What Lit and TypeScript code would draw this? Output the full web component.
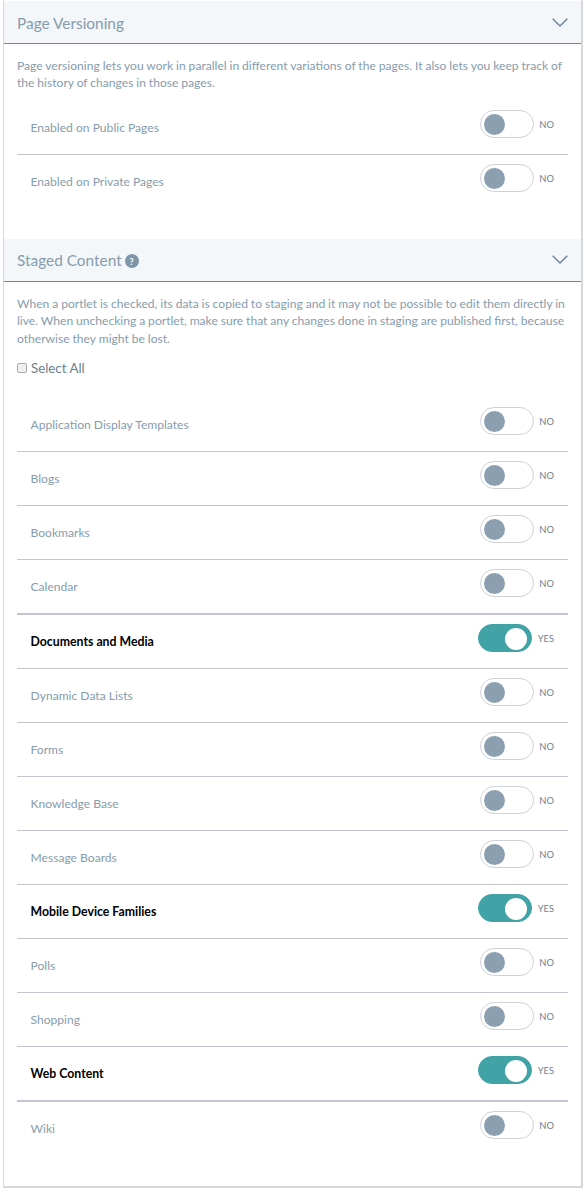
import { LitElement, html, css } from "lit";
import { customElement } from "lit/decorators.js";

const row = (label: string, on = false, thick = false, last = false) => html`
  <div class="row ${thick ? "thick" : ""} ${last ? "last" : ""}">
    <span class="label ${on ? "on" : ""}">${label}</span>
    <span class="switch ${on ? "on" : ""}"><span class="track"><span class="knob"></span></span><span class="state">${on ? "YES" : "NO"}</span></span>
  </div>`;

const chevron = html`<svg class="chev" width="16" height="9" viewBox="0 0 16 9"><path d="M.7.7 8 8 15.3.7" fill="none" stroke="#6b8299" stroke-width="1.4"/></svg>`;

@customElement("app-root")
export class AppRoot extends LitElement {
  static styles = css`
    :host { display: block; width: 587px; height: 1189px; background: #fff; font-family: "Source Sans Pro", "Lato", "Noto Sans", sans-serif; overflow: hidden; }
    .panel { box-sizing: border-box; width: 580px; height: 1188px; margin-left: 3px; background: #fff; border: 1px solid #d8d8d8; border-top: 0; border-right-width: 2px; border-bottom-width: 2px; padding-top: 1px; }
    .head { box-sizing: border-box; height: 43px; background: #f4f7fa; border-bottom: 1px solid #4f9a98; padding: 0 13px; display: flex; align-items: center; font-size: 15.4px; color: #869cad; }
    .head .t { display: flex; align-items: center; gap: 3px; flex: 1; padding-top: 1px; }
    .help { width: 14px; height: 14px; border-radius: 50%; background: #7f95a8; color: #fff; font-size: 9px; font-weight: 700; display: inline-flex; align-items: center; justify-content: center; margin-top: 2px; }
    .chev { margin-right: 0; }
    .body { padding: 13px 13px 0; }
    .desc { margin: 0; font-size: 12.1px; line-height: 17.4px; color: #869cad; word-spacing: -0.2px; }
    .select { display: flex; align-items: center; gap: 4px; height: 20px; margin-top: 11px; font-size: 13.3px; color: #6b7f92; }
    .select input { appearance: none; box-sizing: border-box; margin: 0; width: 10px; height: 10px; border: 1px solid #a9a9a9; border-radius: 2px; background: #f0f0f0; }
    .row { box-sizing: border-box; height: 54px; border-bottom: 1px solid #c2c5d3; display: flex; align-items: flex-start; justify-content: space-between; padding: 9px 13px 0 13.5px; }
    .row.thick { border-bottom-width: 2px; height: 55px; }
    .row.last { border-bottom: 0; }
    .label { font-size: 12.1px; color: #869cad; margin-top: 10px; line-height: 16px; }
    .label.on { color: #000; font-weight: 700; font-size: 12.3px; }
    .switch { display: flex; align-items: flex-start; }
    .track { box-sizing: border-box; width: 54px; height: 28px; border: 1px solid #cfd3d6; border-radius: 14px; background: #fff; display: block; padding: 3px; }
    .knob { display: block; width: 21px; height: 21px; border-radius: 50%; background: #8b9fb1; }
    .state { font-size: 9.4px; line-height: 12px; color: #6b7f92; width: 19px; margin-left: 2px; text-align: right; margin-top: 9px; box-sizing: border-box; padding-right: 1px; }
    .switch.on .track { background: #41a3a6; border-color: #41a3a6; padding: 3px; display: flex; justify-content: flex-end; }
    .switch.on .knob { background: #fff; width: 22px; height: 22px; margin-right: 1px; }
    .switch.on .state { width: 21px; }
    .gap { height: 30px; }
    .list1 { margin-top: 9px; }
    .list2 { margin-top: 20px; }
  `;

  render() {
    return html`<div class="panel">
      <div class="head"><span class="t">Page Versioning</span>${chevron}</div>
      <div class="body">
        <p class="desc">Page versioning lets you work in parallel in different variations of the pages. It also lets you keep track of the history of changes in those pages.</p>
        <div class="list1">
          ${row("Enabled on Public Pages")}
          ${row("Enabled on Private Pages", false, false, true)}
        </div>
      </div>
      <div class="gap"></div>
      <div class="head"><span class="t">Staged Content <span class="help">?</span></span>${chevron}</div>
      <div class="body">
        <p class="desc">When a portlet is checked, its data is copied to staging and it may not be possible to edit them directly in live. When unchecking a portlet, make sure that any changes done in staging are published first, because otherwise they might be lost.</p>
        <label class="select"><input type="checkbox" />Select All</label>
        <div class="list2">
          ${row("Application Display Templates")}
          ${row("Blogs")}
          ${row("Bookmarks")}
          ${row("Calendar", false, true)}
          ${row("Documents and Media", true)}
          ${row("Dynamic Data Lists")}
          ${row("Forms")}
          ${row("Knowledge Base")}
          ${row("Message Boards")}
          ${row("Mobile Device Families", true)}
          ${row("Polls")}
          ${row("Shopping")}
          ${row("Web Content", true, true)}
          ${row("Wiki", false, false, true)}
        </div>
      </div>
    </div>`;
  }
}
